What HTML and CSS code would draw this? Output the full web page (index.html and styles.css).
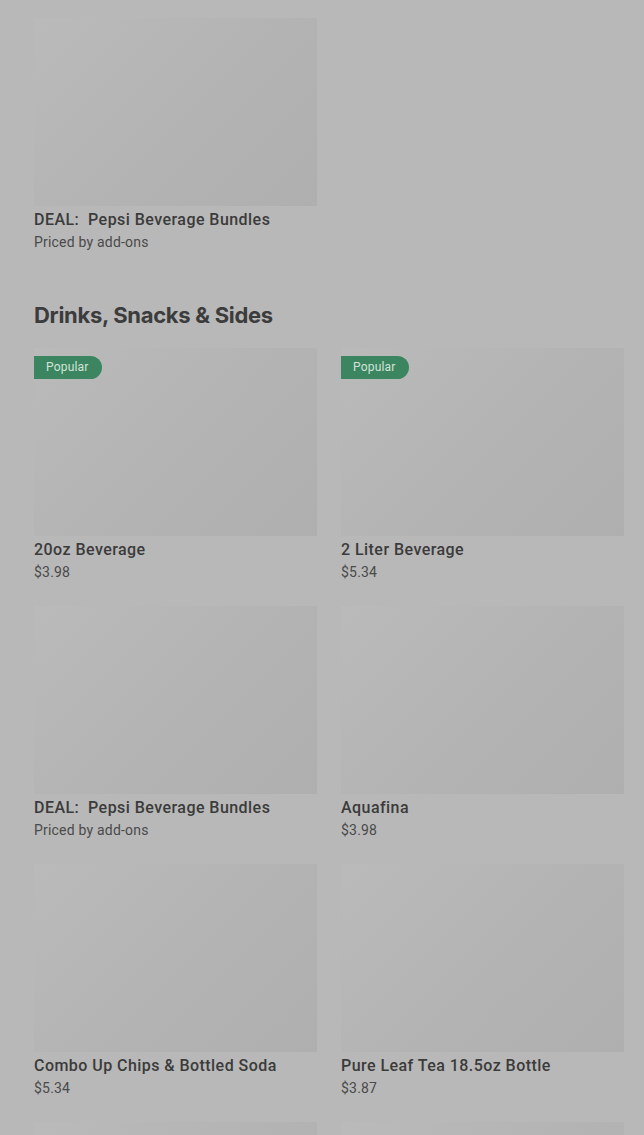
FILE: index.html
```html
<!DOCTYPE html>
<html lang="en">
<head>
    <meta charset="UTF-8">
    <meta name="viewport" content="width=device-width, initial-scale=1.0">
    <title>Menu</title>
    <link rel="stylesheet" href="styles.css">
</head>
<body>

    <!-- Deals section (scrolled past) -->
    <div class="section">
        <div class="grid">
            <div class="card">
                <div class="thumb"></div>
                <div class="title">DEAL:&nbsp; Pepsi Beverage Bundles</div>
                <div class="price">Priced by add-ons</div>
            </div>
        </div>
    </div>

    <!-- Drinks, Snacks & Sides -->
    <div class="section drinks">
        <h2>Drinks, Snacks &amp; Sides</h2>
        <div class="grid">
            <div class="card">
                <div class="thumb"><span class="badge">Popular</span></div>
                <div class="title">20oz Beverage</div>
                <div class="price">$3.98</div>
            </div>
            <div class="card">
                <div class="thumb"><span class="badge">Popular</span></div>
                <div class="title">2 Liter Beverage</div>
                <div class="price">$5.34</div>
            </div>
            <div class="card">
                <div class="thumb"></div>
                <div class="title">DEAL:&nbsp; Pepsi Beverage Bundles</div>
                <div class="price">Priced by add-ons</div>
            </div>
            <div class="card">
                <div class="thumb"></div>
                <div class="title">Aquafina</div>
                <div class="price">$3.98</div>
            </div>
            <div class="card">
                <div class="thumb"></div>
                <div class="title">Combo Up Chips &amp; Bottled Soda</div>
                <div class="price">$5.34</div>
            </div>
            <div class="card">
                <div class="thumb"></div>
                <div class="title">Pure Leaf Tea 18.5oz Bottle</div>
                <div class="price">$3.87</div>
            </div>
            <!-- next row, only the tops of the pictures are in view -->
            <div class="card">
                <div class="thumb"></div>
            </div>
            <div class="card">
                <div class="thumb"></div>
            </div>
        </div>
    </div>

</body>
</html>
```

FILE: styles.css
```css
html, body {
    margin: 0;
    height: 100%;
    overflow: hidden;
    background: #b8b8b8;
    font-family: Roboto, 'Liberation Sans', sans-serif;
    color: #3a3a3a;
}

body {
    padding: 18px 20px 0 34px;
    box-sizing: border-box;
}

.grid {
    display: grid;
    grid-template-columns: 283px 283px;
    column-gap: 24px;
    row-gap: 25px;
}

.drinks {
    margin-top: 48px;
}

h2 {
    margin: 0 0 17px;
    font-family: Inter, 'Liberation Sans', sans-serif;
    font-size: 22px;
    font-weight: 700;
    line-height: 32px;
    letter-spacing: -0.3px;
    color: #3c3c3c;
}

.thumb {
    position: relative;
    height: 188px;
    background: linear-gradient(135deg, #bababa 0%, #b3b3b3 55%, #afafaf 100%);
}

.badge {
    position: absolute;
    top: 8px;
    left: 0;
    height: 23px;
    line-height: 23px;
    padding: 0 13px 0 12px;
    border-radius: 0 12px 12px 0;
    background: #3b8660;
    color: #d3e3da;
    font-size: 12px;
    letter-spacing: 0.2px;
}

.title {
    margin-top: 3px;
    font-size: 16px;
    line-height: 22px;
    font-weight: 500;
    letter-spacing: 0.45px;
    color: #3b3b3b;
}

.price {
    margin-top: 2px;
    font-size: 14px;
    line-height: 18px;
    letter-spacing: 0.2px;
    color: #4a4a4a;
}
```
